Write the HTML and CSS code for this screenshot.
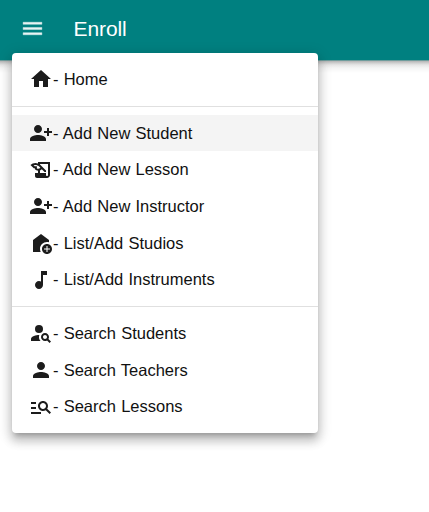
FILE: index.html
```
<!DOCTYPE html>
<html lang="en">
<head>
<meta charset="utf-8">
<title>Enroll</title>
<link rel="stylesheet" href="styles.css">
</head>
<body>
<header class="app-bar">
  <svg class="burger" viewBox="0 0 24 24"><path d="M3 18h18v-2H3v2zm0-5h18v-2H3v2zm0-7v2h18V6H3z"/></svg>
  <h1 class="title">Enroll</h1>
</header>
<div class="bar-shadow"></div>
<nav class="menu">
  <a class="item"><svg class="icon" viewBox="0 0 24 24"><path d="M10 20v-6h4v6h5v-8h3L12 3 2 12h3v8z"/></svg><span>- Home</span></a>
  <hr class="divider">
  <a class="item selected"><svg class="icon" viewBox="0 0 24 24"><path d="M13 8c0-2.21-1.79-4-4-4S5 5.79 5 8s1.79 4 4 4 4-1.79 4-4zm2 2v2h3v3h2v-3h3v-2h-3V7h-2v3h-3zM1 18v2h16v-2c0-2.66-5.33-4-8-4s-8 1.34-8 4z"/></svg><span>- Add New Student</span></a>
  <a class="item"><svg class="icon" viewBox="0 0 24 24"><path d="M9 4v1.38c-.83-.33-1.72-.5-2.61-.5-1.79 0-3.58.68-4.95 2.05l3.33 3.33h1.11v1.11c.86.86 1.98 1.31 3.11 1.36V15H6v3c0 1.1.9 2 2 2h10c1.66 0 3-1.34 3-3V4H9zm-1.11 6.41V8.26H5.61L4.57 7.22a5.07 5.07 0 0 1 1.82-.34c1.34 0 2.59.52 3.54 1.46l1.41 1.41-.2.2c-.51.51-1.19.8-1.92.8-.47 0-.93-.12-1.33-.34zM19 17c0 .55-.45 1-1 1s-1-.45-1-1v-2h-6v-2.59c.57-.23 1.1-.57 1.56-1.03l.2-.2L15.59 14H17v-1.41l-6-5.97V6h8v11z"/></svg><span>- Add New Lesson</span></a>
  <a class="item"><svg class="icon" viewBox="0 0 24 24"><path d="M13 8c0-2.21-1.79-4-4-4S5 5.79 5 8s1.79 4 4 4 4-1.79 4-4zm2 2v2h3v3h2v-3h3v-2h-3V7h-2v3h-3zM1 18v2h16v-2c0-2.66-5.33-4-8-4s-8 1.34-8 4z"/></svg><span>- Add New Instructor</span></a>
  <a class="item"><svg class="icon" viewBox="0 0 24 24"><path d="M18 11c.7 0 1.37.1 2 .29V9l-8-6-8 6v12h7.68c-.43-.91-.68-1.92-.68-3 0-3.87 3.13-7 7-7z"/><path d="M18 13c-2.76 0-5 2.24-5 5s2.24 5 5 5 5-2.24 5-5-2.24-5-5-5zm3 5.5h-2.5V21h-1v-2.5H15v-1h2.5V15h1v2.5H21v1z"/></svg><span>- List/Add Studios</span></a>
  <a class="item"><svg class="icon" viewBox="0 0 24 24"><path d="M12 3v10.55c-.59-.34-1.27-.55-2-.55-2.21 0-4 1.79-4 4s1.79 4 4 4 4-1.79 4-4V7h4V3h-6z"/></svg><span>- List/Add Instruments</span></a>
  <hr class="divider">
  <a class="item"><svg class="icon" viewBox="0 0 24 24"><circle cx="10" cy="8" r="4"/><path d="M10.35 14.01C7.62 13.91 2 15.27 2 18v2h9.54c-2.47-2.76-1.23-5.89-1.19-5.99zm9.08 4.01c.36-.59.57-1.28.57-2.02 0-2.21-1.79-4-4-4s-4 1.79-4 4 1.79 4 4 4c.74 0 1.43-.22 2.02-.57L20.59 22 22 20.59l-2.57-2.57zM16 18c-1.1 0-2-.9-2-2s.9-2 2-2 2 .9 2 2-.9 2-2 2z"/></svg><span>- Search Students</span></a>
  <a class="item"><svg class="icon" viewBox="0 0 24 24"><path d="M12 12c2.21 0 4-1.79 4-4s-1.79-4-4-4-4 1.79-4 4 1.79 4 4 4zm0 2c-2.67 0-8 1.34-8 4v2h16v-2c0-2.66-5.33-4-8-4z"/></svg><span>- Search Teachers</span></a>
  <a class="item"><svg class="icon" viewBox="0 0 24 24"><path d="M7 9H2V7h5v2zm0 3H2v2h5v-2zm13.59 7l-3.83-3.83c-.8.52-1.74.83-2.76.83-2.76 0-5-2.24-5-5s2.24-5 5-5 5 2.24 5 5c0 1.02-.31 1.96-.83 2.75L22 17.59 20.59 19zM17 11c0-1.65-1.35-3-3-3s-3 1.35-3 3 1.35 3 3 3 3-1.35 3-3zM2 19h10v-2H2v2z"/></svg><span>- Search Lessons</span></a>
</nav>
</body>
</html>
```
FILE: styles.css
```
* { box-sizing: border-box; }
body {
  margin: 0;
  background: #fff;
  font-family: "Liberation Sans", Arial, sans-serif;
}
.app-bar {
  display: flex;
  align-items: center;
  height: 60px;
  padding: 0 20px 3px;
  background: #008080;
  color: #fff;
}
.bar-shadow {
  height: 13px;
  background: linear-gradient(#6f9c9c 0 1px, #b4b4b4 1px, #cfcfcf 3px, #e6e6e6 5px, #f5f5f5 8px, #fff 13px);
}
.burger { width: 25px; height: 25px; fill: #e8f4f4; stroke: #e8f4f4; stroke-width: .4; }
.title { margin: 0 0 0 28.5px; font-size: 21px; font-weight: 400; letter-spacing: -.1px; }
.menu {
  position: absolute;
  top: 53px;
  left: 12px;
  width: 305.5px;
  padding: 8px 0;
  border-radius: 4px;
  background: #fff;
  box-shadow: 0 5px 5px -3px rgba(0,0,0,.22), 0 8px 10px 1px rgba(0,0,0,.16), 0 3px 14px 2px rgba(0,0,0,.14);
}
.item {
  display: flex;
  align-items: center;
  height: 36.7px;
  padding-left: 17px;
  color: #111;
  font-size: 16.5px;
  letter-spacing: 0;
  word-spacing: .6px;
  white-space: nowrap;
}
.selected { background: #f4f4f4; }
.icon { width: 24px; height: 24px; fill: #1c1c1c; }
.divider { height: 1px; margin: 8px 0; border: 0; background: #e0e0e0; }
```
